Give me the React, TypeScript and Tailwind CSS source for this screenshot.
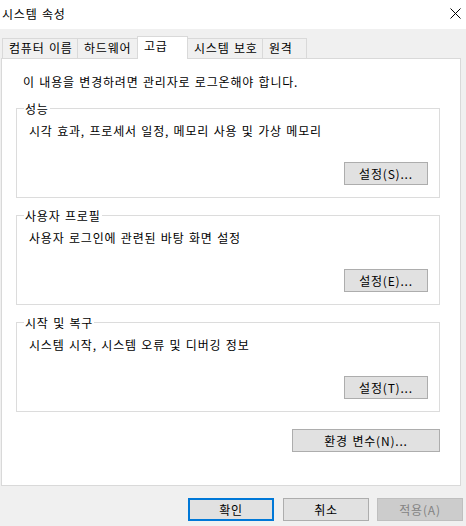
import React from 'react';

const tabs = [
  { label: '컴퓨터 이름', w: 'w-[76px]' },
  { label: '하드웨어', w: 'w-[61px]' },
  { label: '고급', w: 'w-[51px]', active: true },
  { label: '시스템 보호', w: 'w-[76px]' },
  { label: '원격', w: 'w-[45px]' },
];

function Button({ children, className = '' }: { children: React.ReactNode; className?: string }) {
  return (
    <div
      className={`h-[23px] flex items-center justify-center border border-[#adadad] bg-[#e1e1e1] text-[12px] leading-[16px] text-black ${className}`}
    >
      {children}
    </div>
  );
}

function Group({ title, text, button, className = '' }: { title: string; text: string; button: string; className?: string }) {
  return (
    <div className={`relative h-[90px] border border-[#dcdcdc] pl-[12px] pr-[11px] pt-[14px] ${className}`}>
      <span className="absolute left-[7px] -top-[8px] px-px bg-white leading-[16px]">{title}</span>
      <div className="leading-[16px]">{text}</div>
      <div className="mt-[23px] flex justify-end">
        <Button className="w-[84px]">{button}</Button>
      </div>
    </div>
  );
}

export default function App() {
  return (
    <div
      className="w-[466px] h-[526px] bg-[#f0f0f0] flex flex-col text-[12px] text-black overflow-hidden tracking-[0.8px] [word-spacing:1px]"
      style={{ fontFamily: '"Noto Sans CJK KR", "Noto Sans", sans-serif' }}
    >
      {/* title bar */}
      <div className="h-[29px] bg-white flex items-center justify-between pl-[2px] pr-[5px]">
        <span className="leading-[16px] -mt-px">시스템 속성</span>
        <svg width="11" height="11" viewBox="0 0 11 11" className="-mt-[2px]">
          <path d="M0.5 0.5 L10.5 10.5 M10.5 0.5 L0.5 10.5" stroke="#000" strokeWidth="1" fill="none" />
        </svg>
      </div>

      {/* tabs */}
      <div className="pt-[8px] pl-[2px] flex items-end h-[30px] relative z-10 -mb-px">
        {tabs.map((t, i) =>
          t.active ? (
            <div
              key={t.label}
              className={`${t.w} h-[23px] bg-white border border-b-0 border-[#d9d9d9] -ml-px pl-[6px] pt-[1px] leading-[16px]`}
            >
              {t.label}
            </div>
          ) : (
            <div
              key={t.label}
              className={`${t.w} h-[20px] bg-[#f0f0f0] border border-b-0 border-[#d9d9d9] ${i > 0 ? '-ml-px' : ''} pl-[6px] pt-[1px] leading-[16px] mb-px`}
            >
              {t.label}
            </div>
          )
        )}
      </div>

      {/* panel */}
      <div className="ml-px w-[460px] h-[428px] border border-[#d9d9d9] bg-white pt-[15px] pl-[14px] pr-[20px]">
        <div className="pl-[7px] leading-[16px]">이 내용을 변경하려면 관리자로 로그온해야 합니다.</div>
        <Group className="mt-[18px]" title="성능" text="시각 효과, 프로세서 일정, 메모리 사용 및 가상 메모리" button="설정(S)..." />
        <Group className="mt-[17px]" title="사용자 프로필" text="사용자 로그인에 관련된 바탕 화면 설정" button="설정(E)..." />
        <Group className="mt-[17px]" title="시작 및 복구" text="시스템 시작, 시스템 오류 및 디버깅 정보" button="설정(T)..." />
        <div className="mt-[17px] flex justify-end">
          <Button className="w-[148px]">환경 변수(N)...</Button>
        </div>
      </div>

      {/* bottom buttons */}
      <div className="mt-[12px] flex justify-end pr-[3px]">
        <div className="w-[86px] h-[23px] flex items-center justify-center border-2 border-[#0078d7] bg-[#e1e1e1] leading-[16px]">
          확인
        </div>
        <Button className="w-[86px] ml-[9px]">취소</Button>
        <div className="w-[86px] h-[23px] ml-[8px] flex items-center justify-center border border-[#bfbfbf] bg-[#cccccc] text-[#838383] leading-[16px]">
          적용(A)
        </div>
      </div>
    </div>
  );
}
